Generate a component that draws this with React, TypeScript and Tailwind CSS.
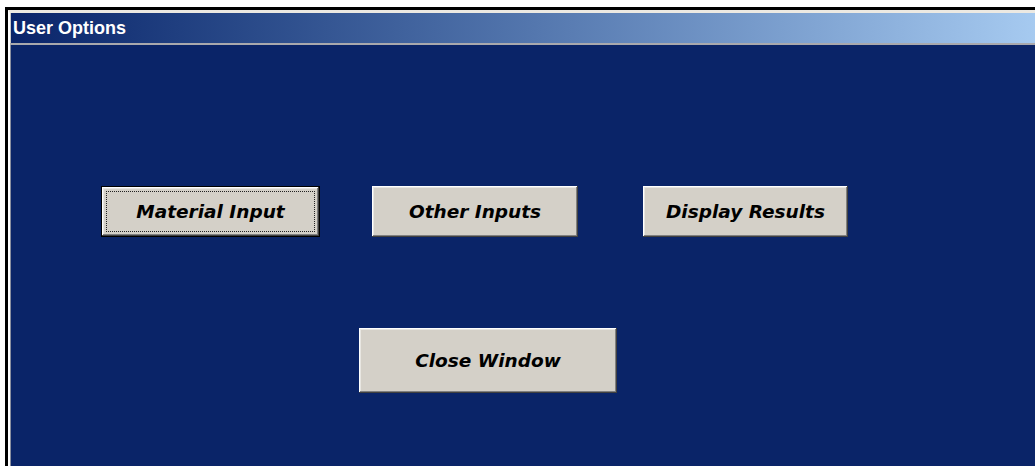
import React from "react";

type BtnProps = {
  label: string;
  w: string;
  h: string;
  isDefault?: boolean;
  className?: string;
};

// classic 3D push button; the default one gets a black frame and a dotted focus box
const OptionButton = ({ label, w, h, isDefault, className }: BtnProps) => {
  return (
    <div className={`${w} ${h} ${className ?? ""} ${isDefault ? "border border-black" : ""}`}>
      <button
        className="w-full h-full bg-[#d4d0c8] shadow-[inset_-1px_-1px_#404040,inset_1px_1px_#ffffff,inset_-2px_-2px_#808080,inset_2px_2px_#e8e6e1] p-[4px] flex"
      >
        <span
          className={`flex-1 flex items-center justify-center text-[18.5px] font-bold italic text-black leading-none pt-[2px] ${
            isDefault ? "border border-dotted border-[#222]" : ""
          }`}
          style={{ fontFamily: '"DejaVu Sans", Verdana, sans-serif' }}
        >
          {label}
        </span>
      </button>
    </div>
  );
};

export default function App() {
  return (
    <div className="w-[1035px] h-[466px] bg-white pt-[7px] pl-[5px] overflow-hidden">
      <div className="h-full border-t-[3px] border-l-[3px] border-black">
        <div className="h-full border-t-[3px] border-l-[2px] border-t-[#ece9e2] border-l-white flex flex-col">
          {/* title bar */}
          <div className="h-[30px] flex items-center pl-[2px] bg-gradient-to-r from-[#0a246a] to-[#a6caf0] border-l border-[#c8c8c8]">
            <span
              className="text-white font-bold text-[18px]"
              style={{ fontFamily: '"Liberation Sans", Arial, sans-serif' }}
            >
              User Options
            </span>
          </div>
          <div className="h-[2px] bg-[#a9a9ad]" />

          {/* body */}
          <div className="flex-1 bg-[#0a2468] border-l border-[#8a8fa0] pt-[141px] pl-[90px]">
            <div className="flex items-start">
              <OptionButton label="Material Input" w="w-[219px]" h="h-[51px]" isDefault />
              <OptionButton label="Other Inputs" w="w-[206px]" h="h-[51px]" className="ml-[52px]" />
              <OptionButton label="Display Results" w="w-[205px]" h="h-[51px]" className="ml-[65px]" />
            </div>
            <div className="mt-[91px] ml-[258px]">
              <OptionButton label="Close Window" w="w-[258px]" h="h-[65px]" />
            </div>
          </div>
        </div>
      </div>
    </div>
  );
}
